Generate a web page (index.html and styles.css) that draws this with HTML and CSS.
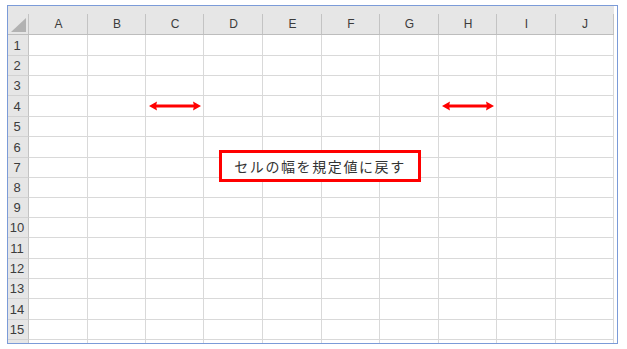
FILE: index.html
```html
<!DOCTYPE html>
<html lang="ja">
<head>
<meta charset="utf-8">
<title>セルの幅を規定値に戻す</title>
<link rel="stylesheet" href="styles.css">
</head>
<body>
<div class="frame">
  <div class="sheet">
    <div class="corner"><svg width="15" height="14" viewBox="0 0 15 14"><polygon points="15,0 15,14 0,14" fill="#b2b2b2"/></svg></div>
    <div class="ch">A</div><div class="ch">B</div><div class="ch">C</div><div class="ch">D</div><div class="ch">E</div><div class="ch">F</div><div class="ch">G</div><div class="ch">H</div><div class="ch">I</div><div class="ch">J</div>

    <div class="rh">1</div><div class="c"></div><div class="c"></div><div class="c"></div><div class="c"></div><div class="c"></div><div class="c"></div><div class="c"></div><div class="c"></div><div class="c"></div><div class="c"></div>
    <div class="rh">2</div><div class="c"></div><div class="c"></div><div class="c"></div><div class="c"></div><div class="c"></div><div class="c"></div><div class="c"></div><div class="c"></div><div class="c"></div><div class="c"></div>
    <div class="rh">3</div><div class="c"></div><div class="c"></div><div class="c"></div><div class="c"></div><div class="c"></div><div class="c"></div><div class="c"></div><div class="c"></div><div class="c"></div><div class="c"></div>
    <div class="rh">4</div><div class="c"></div><div class="c"></div>
    <div class="c arrow-cell"><svg class="arrow" width="52" height="10" viewBox="0 0 52 10"><rect x="5" y="3.5" width="42" height="3" fill="#ff0000"/><polygon points="0,5 8,0.5 7,5 8,9.5" fill="#ff0000"/><polygon points="52,5 44,0.5 45,5 44,9.5" fill="#ff0000"/></svg></div>
    <div class="c"></div><div class="c"></div><div class="c"></div><div class="c"></div>
    <div class="c arrow-cell"><svg class="arrow" width="52" height="10" viewBox="0 0 52 10"><rect x="5" y="3.5" width="42" height="3" fill="#ff0000"/><polygon points="0,5 8,0.5 7,5 8,9.5" fill="#ff0000"/><polygon points="52,5 44,0.5 45,5 44,9.5" fill="#ff0000"/></svg></div>
    <div class="c"></div><div class="c"></div>
    <div class="rh">5</div><div class="c"></div><div class="c"></div><div class="c"></div><div class="c"></div><div class="c"></div><div class="c"></div><div class="c"></div><div class="c"></div><div class="c"></div><div class="c"></div>
    <div class="rh">6</div><div class="c"></div><div class="c"></div><div class="c"></div><div class="c"></div><div class="c"></div><div class="c"></div><div class="c"></div><div class="c"></div><div class="c"></div><div class="c"></div>
    <div class="rh">7</div><div class="c"></div><div class="c"></div><div class="c"></div><div class="c"></div><div class="c"></div><div class="c"></div><div class="c"></div><div class="c"></div><div class="c"></div><div class="c"></div>
    <div class="rh">8</div><div class="c"></div><div class="c"></div><div class="c"></div><div class="c"></div><div class="c"></div><div class="c"></div><div class="c"></div><div class="c"></div><div class="c"></div><div class="c"></div>
    <div class="rh">9</div><div class="c"></div><div class="c"></div><div class="c"></div><div class="c"></div><div class="c"></div><div class="c"></div><div class="c"></div><div class="c"></div><div class="c"></div><div class="c"></div>
    <div class="rh">10</div><div class="c"></div><div class="c"></div><div class="c"></div><div class="c"></div><div class="c"></div><div class="c"></div><div class="c"></div><div class="c"></div><div class="c"></div><div class="c"></div>
    <div class="rh">11</div><div class="c"></div><div class="c"></div><div class="c"></div><div class="c"></div><div class="c"></div><div class="c"></div><div class="c"></div><div class="c"></div><div class="c"></div><div class="c"></div>
    <div class="rh">12</div><div class="c"></div><div class="c"></div><div class="c"></div><div class="c"></div><div class="c"></div><div class="c"></div><div class="c"></div><div class="c"></div><div class="c"></div><div class="c"></div>
    <div class="rh">13</div><div class="c"></div><div class="c"></div><div class="c"></div><div class="c"></div><div class="c"></div><div class="c"></div><div class="c"></div><div class="c"></div><div class="c"></div><div class="c"></div>
    <div class="rh">14</div><div class="c"></div><div class="c"></div><div class="c"></div><div class="c"></div><div class="c"></div><div class="c"></div><div class="c"></div><div class="c"></div><div class="c"></div><div class="c"></div>
    <div class="rh">15</div><div class="c"></div><div class="c"></div><div class="c"></div><div class="c"></div><div class="c"></div><div class="c"></div><div class="c"></div><div class="c"></div><div class="c"></div><div class="c"></div>
    <div class="rh part"></div><div class="c part"></div><div class="c part"></div><div class="c part"></div><div class="c part"></div><div class="c part"></div><div class="c part"></div><div class="c part"></div><div class="c part"></div><div class="c part"></div><div class="c part"></div>
  </div>
  <div class="callout">セルの幅を規定値に戻す</div>
</div>
</body>
</html>
```
FILE: styles.css
```css
html, body {
  margin: 0;
  padding: 0;
  background: #ffffff;
}

body {
  padding: 5px 0 0 7px;
  font-family: "Liberation Sans", "Noto Sans CJK JP", sans-serif;
}

.frame {
  position: relative;
  box-sizing: border-box;
  width: 611px;
  height: 339px;
  border: 1px solid #7b9bd8;
  padding-right: 3px;
  background: #ffffff;
}

.sheet {
  display: grid;
  grid-template-columns: 21px 59px 58px 58px 59px 59px 58px 59px 58px 59px 58px;
  grid-template-rows: 29px 21px 20px 20px 21px 20px 21px 20px 20px 20px 20px 21px 20px 20px 21px 20px 3px;
}

.corner,
.ch {
  box-sizing: border-box;
  background: linear-gradient(#c3c3c3, #c3c3c3) right bottom / 1px 20px no-repeat, #e6e6e6;
  border-bottom: 1px solid #bdbdbd;
}

.corner {
  display: flex;
  align-items: flex-end;
  justify-content: flex-end;
  padding: 0 3px 2px 0;
}

.corner svg {
  display: block;
}

.ch {
  display: flex;
  align-items: center;
  justify-content: center;
  padding-top: 8px;
  font-size: 12px;
  color: #3c3c3c;
}

.rh {
  box-sizing: border-box;
  display: flex;
  align-items: center;
  justify-content: center;
  padding-right: 2px;
  background: #e6e6e6;
  border-right: 1px solid #c3c3c3;
  border-bottom: 1px solid #d2d2d2;
  font-size: 13px;
  color: #3c3c3c;
}

.c {
  box-sizing: border-box;
  border-right: 1px solid #d9d9d9;
  border-bottom: 1px solid #d9d9d9;
}

.part {
  border-bottom: none;
}

.arrow-cell {
  display: flex;
  align-items: center;
  padding-left: 3px;
}

.arrow {
  display: block;
}

.callout {
  position: absolute;
  left: 211px;
  top: 144px;
  box-sizing: border-box;
  width: 202px;
  height: 32px;
  border: 3px solid #ff0000;
  background: #ffffff;
  display: flex;
  align-items: center;
  justify-content: center;
  font-family: "Noto Sans CJK JP", sans-serif;
  font-size: 14px;
  letter-spacing: 1.6px;
  color: #333333;
}
```
